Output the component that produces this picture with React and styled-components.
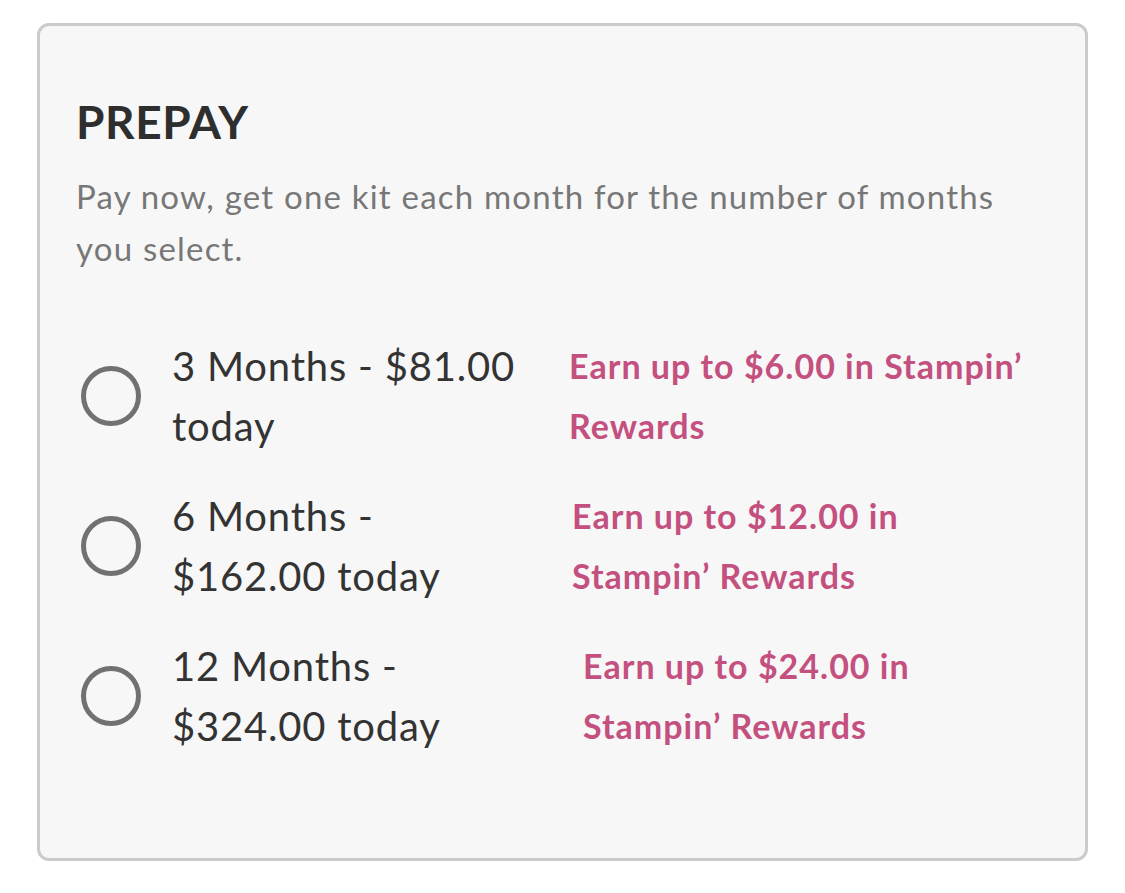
import React from 'react';
import styled, { createGlobalStyle } from 'styled-components';

const GlobalStyle = createGlobalStyle`
  body {
    margin: 0;
    background: #ffffff;
    font-family: Lato, "Open Sans", Arial, sans-serif;
  }
`;

const Page = styled.div`
  padding: 23px 37px 32px 37px;
`;

const Card = styled.section`
  box-sizing: border-box;
  width: 1051px;
  height: 838px;
  background: #f7f7f7;
  border: 3px solid #cbcbcb;
  border-radius: 12px;
  padding: 68px 36px 0 36px;
`;

const Title = styled.h2`
  margin: 0;
  font-size: 46px;
  line-height: 56px;
  font-weight: 700;
  color: #2e2e2e;
  letter-spacing: 0.6px;
`;

const Description = styled.p`
  margin: 20px 0 0 0;
  font-size: 33px;
  line-height: 52px;
  letter-spacing: 1.2px;
  color: #777777;
  max-width: 940px;
`;

const Options = styled.div`
  display: flex;
  flex-direction: column;
  gap: 30px;
  margin-top: 62px;
`;

const Row = styled.label`
  display: flex;
  align-items: center;
  padding-left: 5px;
  cursor: pointer;
`;

const Radio = styled.span`
  box-sizing: border-box;
  flex: 0 0 60px;
  width: 60px;
  height: 60px;
  border: 5px solid #717171;
  border-radius: 50%;
  margin-right: 31px;
`;

const Plan = styled.div`
  flex: 0 0 ${(p) => p.$width}px;
  margin-right: 52px;
  font-size: 40px;
  line-height: 60px;
  letter-spacing: 0.8px;
  color: #333333;
`;

const Reward = styled.div`
  flex: 0 1 ${(p) => p.$width}px;
  font-size: 34px;
  line-height: 60px;
  letter-spacing: 1px;
  font-weight: 700;
  color: #c4507f;
`;

const plans = [
  { plan: '3 Months - $81.00 today', reward: 'Earn up to $6.00 in Stampin\u2019 Rewards', width: 345, rewardWidth: 470 },
  { plan: '6 Months - $162.00 today', reward: 'Earn up to $12.00 in Stampin\u2019 Rewards', width: 348, rewardWidth: 440 },
  { plan: '12 Months - $324.00 today', reward: 'Earn up to $24.00 in Stampin\u2019 Rewards', width: 359, rewardWidth: 440 },
];

export default function App() {
  return (
    <Page>
      <GlobalStyle />
      <Card>
        <Title>PREPAY</Title>
        <Description>
          Pay now, get one kit each month for the number of months you select.
        </Description>
        <Options>
          {plans.map((p) => (
            <Row key={p.plan}>
              <Radio />
              <Plan $width={p.width}>{p.plan}</Plan>
              <Reward $width={p.rewardWidth}>{p.reward}</Reward>
            </Row>
          ))}
        </Options>
      </Card>
    </Page>
  );
}
